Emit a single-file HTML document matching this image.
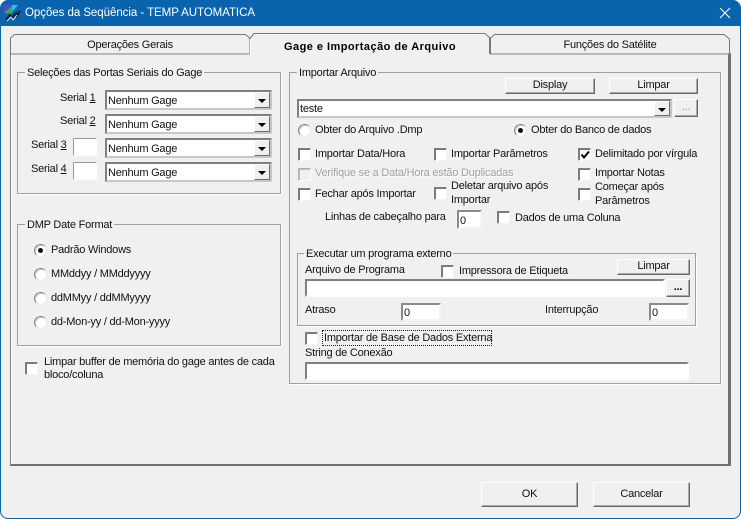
<!DOCTYPE html>
<html><head><meta charset="utf-8">
<style>
*{box-sizing:border-box}
html,body{margin:0;padding:0;width:741px;height:519px;overflow:hidden;background:#fff}
body{position:relative;font-family:"Liberation Sans",sans-serif;font-size:11px;letter-spacing:-.22px;color:#111}
#win{position:absolute;left:0;top:0;width:741px;height:519px;background:#f0f0f0;border:1px solid #0a64ad;border-top:0;border-radius:8px 8px 8px 8px;overflow:hidden}
#tb{position:absolute;left:-1px;top:0;width:741px;height:26px;background:#0a64ad}
.a{position:absolute}
.t{position:absolute;line-height:14px;white-space:nowrap}
.g{position:absolute;border:1px solid #a0a0a0;box-shadow:1px 1px 0 #fff}
.gl{position:absolute;top:-7px;background:#f0f0f0;padding:0 2px;line-height:14px;white-space:nowrap}
.e{position:absolute;background:#fff;border:2px solid;border-color:#8a8a8a #f4f4f4 #f4f4f4 #8a8a8a;line-height:14px;padding:1px 0 0 1px;white-space:nowrap}
.b{position:absolute;background:#f0f0f0;border:1px solid;border-color:#fff #6a6a6a #6a6a6a #fff;box-shadow:inset -1px -1px 0 #a8a8a8;text-align:center;white-space:nowrap}
.c{position:absolute;width:13px;height:13px;background:#fff;border:1px solid;border-color:#808080 #f4f4f4 #f4f4f4 #808080;box-shadow:inset 1px 1px 0 #777}
.c.d{background:#f0f0f0;box-shadow:inset 1px 1px 0 #bbb;border-color:#b0b0b0 #fff #fff #b0b0b0}
.r{position:absolute;width:13px;height:13px;border-radius:50%;background:#fff;border:1px solid;border-color:#888 #e8e8e8 #e8e8e8 #888;box-shadow:inset 1px 1px 0 #ccc}
.r.o:after{content:"";position:absolute;left:3px;top:3px;width:5px;height:5px;border-radius:50%;background:#111}
.ar{position:absolute;right:0;top:0;bottom:0;width:16px;background:#f0f0f0;border:1px solid;border-color:#fff #6a6a6a #6a6a6a #fff}
.ar:after{content:"";position:absolute;left:3px;top:6px;border-left:4px solid transparent;border-right:4px solid transparent;border-top:4px solid #000}
u{text-decoration:underline}
</style></head><body>
<div id="win">
<div id="tb"></div>
</div>
<svg class="a" style="left:4px;top:5px" width="17" height="17" viewBox="0 0 17 17">
<polygon points="0,0 8,0 0,8" fill="#6d3bd1"/><polygon points="8,0 14,0 8,7" fill="#2ec4d6"/><polygon points="0,8 8,1 8,9" fill="#35b24a"/>
<path d="M2 15 L6 10 L8 13 L12 8 L13 11 L16 6" stroke="#10203a" stroke-width="2" fill="none"/>
<path d="M3 16 L7 12 L9 15 L13 10" stroke="#dfe8f0" stroke-width="1" fill="none"/>
</svg>
<div class="t" style="left:25px;top:6px;color:#fff;font-size:11.5px;letter-spacing:-.05px;line-height:15px">Opções da Seqüência - TEMP AUTOMATICA</div>
<svg class="a" style="left:719px;top:7px" width="12" height="12" viewBox="0 0 12 12"><path d="M1 1 L11 11 M11 1 L1 11" stroke="#fff" stroke-width="1.1"/></svg>

<!-- panel -->
<div class="a" style="left:10px;top:53px;width:721px;height:413px;border:1px solid;border-color:#808080 #707070 #707070 #808080;border-right-width:3px;border-bottom-width:2px;background:#f0f0f0;box-shadow:inset 1px 1px 0 #fff"></div>
<!-- tabs -->
<svg class="a" style="left:8px;top:31px" width="726" height="26" viewBox="0 0 726 26">
<path d="M2.5 23 V7 L6.5 3.5 H237.5 L241.5 7 V23 H2.5Z" fill="#f0f0f0" stroke="#777"/>
<path d="M482.5 23 V7 L486.5 3.5 H716 L721.5 8 V23 Z" fill="#f0f0f0" stroke="#777"/>
<path d="M241.5 26 V8 L246 2.5 H477 L481.5 6.5 V26" fill="#f0f0f0" stroke="none"/>
<path d="M241.5 8 L246 2.5 H477 L481.5 6.5 V23" fill="none" stroke="#777"/>
<path d="M242.5 8 V26 M246 3.5 H477" stroke="#fff" fill="none"/>
</svg>
<div class="t" style="left:10px;top:38px;width:240px;text-align:center">Operações Gerais</div>
<div class="t" style="left:251px;top:40px;width:238px;text-align:center;font-weight:bold;letter-spacing:.46px;color:#000">Gage e Importação de Arquivo</div>
<div class="t" style="left:491px;top:38px;width:238px;text-align:center">Funções do Satélite</div>

<!-- group 1 -->
<div class="g" style="left:17px;top:72px;width:264px;height:122px"><div class="gl" style="left:7px">Seleções das Portas Seriais do Gage</div></div>
<div class="t" style="left:60px;top:91px">Serial <u>1</u></div>
<div class="t" style="left:60px;top:114px">Serial <u>2</u></div>
<div class="t" style="left:31px;top:138px">Serial <u>3</u></div>
<div class="t" style="left:31px;top:162px">Serial <u>4</u></div>
<div class="e" style="left:73px;top:138px;width:24px;height:18px;border-color:#9a9a9a #fff #fff #9a9a9a;border-width:1px"></div>
<div class="e" style="left:73px;top:162px;width:24px;height:18px;border-color:#9a9a9a #fff #fff #9a9a9a;border-width:1px"></div>
<div class="e" style="left:105px;top:90px;width:167px;height:20px;padding-top:2px;border-color:#808080 #c8c8c8 #c8c8c8 #808080">Nenhum Gage<div class="ar"></div></div>
<div class="e" style="left:105px;top:114px;width:167px;height:20px;padding-top:2px;border-color:#808080 #c8c8c8 #c8c8c8 #808080">Nenhum Gage<div class="ar"></div></div>
<div class="e" style="left:105px;top:138px;width:167px;height:20px;padding-top:2px;border-color:#808080 #c8c8c8 #c8c8c8 #808080">Nenhum Gage<div class="ar"></div></div>
<div class="e" style="left:105px;top:162px;width:167px;height:20px;padding-top:2px;border-color:#808080 #c8c8c8 #c8c8c8 #808080">Nenhum Gage<div class="ar"></div></div>

<!-- DMP -->
<div class="g" style="left:17px;top:224px;width:264px;height:122px"><div class="gl" style="left:7px">DMP Date Format</div></div>
<div class="r o" style="left:34px;top:244px"></div><div class="t" style="left:51px;top:243px">Padrão Windows</div>
<div class="r" style="left:34px;top:268px"></div><div class="t" style="left:51px;top:267px">MMddyy / MMddyyyy</div>
<div class="r" style="left:34px;top:292px"></div><div class="t" style="left:51px;top:291px">ddMMyy / ddMMyyyy</div>
<div class="r" style="left:34px;top:316px"></div><div class="t" style="left:51px;top:315px">dd-Mon-yy / dd-Mon-yyyy</div>
<div class="c" style="left:25px;top:362px"></div>
<div class="t" style="left:44px;top:355px">Limpar buffer de memória do gage antes de cada</div>
<div class="t" style="left:44px;top:368px">bloco/coluna</div>

<!-- Importar -->
<div class="g" style="left:289px;top:72px;width:432px;height:312px"><div class="gl" style="left:7px">Importar Arquivo</div></div>
<div class="b" style="left:505px;top:78px;width:90px;height:16px;line-height:13px">Display</div>
<div class="b" style="left:609px;top:78px;width:89px;height:16px;line-height:13px">Limpar</div>
<div class="e" style="left:297px;top:99px;width:375px;height:19px;padding-top:1px;border-color:#808080 #c8c8c8 #c8c8c8 #808080">teste<div class="ar"></div></div>
<div class="b" style="left:674px;top:99px;width:24px;height:18px;line-height:15px;color:#999">...</div>
<div class="r" style="left:298px;top:124px"></div><div class="t" style="left:315px;top:123px">Obter do Arquivo .Dmp</div>
<div class="r o" style="left:514px;top:124px"></div><div class="t" style="left:531px;top:123px">Obter do Banco de dados</div>

<div class="c" style="left:298px;top:148px"></div><div class="t" style="left:315px;top:147px">Importar Data/Hora</div>
<div class="c" style="left:434px;top:148px"></div><div class="t" style="left:451px;top:147px">Importar Parâmetros</div>
<div class="c" style="left:578px;top:148px"><svg class="a" style="left:1px;top:1px" width="10" height="10" viewBox="0 0 10 10"><path d="M1.5 4.5 L4 7.5 L9 1.5" stroke="#000" stroke-width="2" fill="none"/></svg></div><div class="t" style="left:595px;top:147px">Delimitado por vírgula</div>

<div class="c d" style="left:298px;top:168px"></div><div class="t" style="left:315px;top:166px;color:#a0a0a0;text-shadow:1px 1px 0 #fff">Verifique se a Data/Hora estão Duplicadas</div>
<div class="c" style="left:578px;top:168px"></div><div class="t" style="left:595px;top:166px">Importar Notas</div>

<div class="c" style="left:298px;top:188px"></div><div class="t" style="left:315px;top:187px">Fechar após Importar</div>
<div class="c" style="left:434px;top:187px"></div><div class="t" style="left:451px;top:179px">Deletar arquivo após</div><div class="t" style="left:451px;top:193px">Importar</div>
<div class="c" style="left:578px;top:188px"></div><div class="t" style="left:595px;top:180px">Começar após</div><div class="t" style="left:595px;top:194px">Parâmetros</div>

<div class="t" style="left:325px;top:210px">Linhas de cabeçalho para</div>
<div class="e" style="left:457px;top:210px;width:25px;height:19px;padding-top:2px">0</div>
<div class="c" style="left:497px;top:211px"></div><div class="t" style="left:515px;top:211px">Dados de uma Coluna</div>

<!-- Executar -->
<div class="g" style="left:297px;top:253px;width:399px;height:73px"><div class="gl" style="left:6px">Executar um programa externo</div></div>
<div class="t" style="left:305px;top:263px">Arquivo de Programa</div>
<div class="c" style="left:441px;top:265px"></div><div class="t" style="left:459px;top:264px">Impressora de Etiqueta</div>
<div class="b" style="left:617px;top:259px;width:73px;height:16px;line-height:13px">Limpar</div>
<div class="e" style="left:305px;top:279px;width:360px;height:18px;border-color:#808080 #fff #fff #808080"></div>
<div class="b" style="left:666px;top:279px;width:24px;height:18px;line-height:15px;font-weight:bold;color:#000">...</div>
<div class="t" style="left:305px;top:303px">Atraso</div>
<div class="e" style="left:401px;top:303px;width:40px;height:18px">0</div>
<div class="t" style="left:545px;top:303px">Interrupção</div>
<div class="e" style="left:649px;top:303px;width:40px;height:18px">0</div>

<div class="c" style="left:305px;top:332px"></div>
<div class="t" style="left:322px;top:330px;width:170px;height:16px;border:1px dotted #222;padding-left:1px;line-height:14px">Importar de Base de Dados Externa</div>
<div class="t" style="left:305px;top:346px">String de Conexão</div>
<div class="e" style="left:305px;top:362px;width:384px;height:18px;border-color:#808080 #fff #fff #808080"></div>

<div class="b" style="left:481px;top:482px;width:97px;height:25px;line-height:22px">OK</div>
<div class="b" style="left:593px;top:482px;width:97px;height:25px;line-height:22px">Cancelar</div>
</body></html>
